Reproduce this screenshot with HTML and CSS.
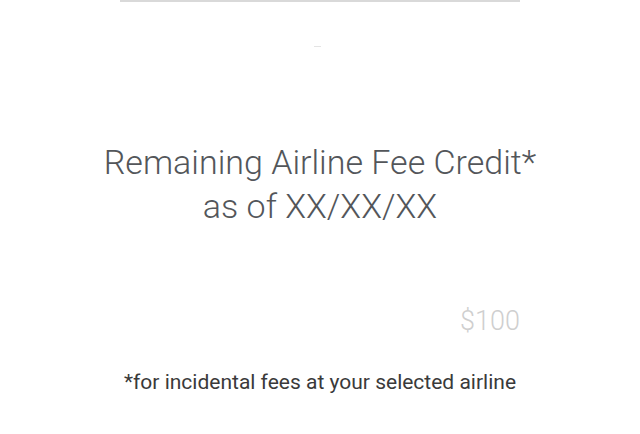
FILE: index.html
```html
<!DOCTYPE html>
<html>
<head>
<meta charset="utf-8">
<link rel="stylesheet" href="styles.css">
</head>
<body>
<div class="page">
  <div class="topbar"></div>
  <div class="dash"></div>
  <h1 class="title">Remaining Airline Fee Credit*<br>as of XX/XX/XX</h1>
  <div class="amount-row"><span class="amount">$100</span></div>
  <p class="note">*for incidental fees at your selected airline</p>
</div>
</body>
</html>
```
FILE: styles.css
```css
html, body {
  margin: 0;
  padding: 0;
  background: #fff;
}
.page {
  width: 640px;
  height: 434px;
  display: flex;
  flex-direction: column;
  align-items: center;
  font-family: Roboto, "Liberation Sans", sans-serif;
  overflow: hidden;
}
.topbar {
  width: 400px;
  height: 2px;
  background: #d9d9d9;
}
.dash {
  width: 7px;
  height: 1px;
  background: #e4e4e4;
  margin-top: 44px;
  margin-right: 5px;
}
.title {
  margin: 93px 0 0;
  font-weight: 300;
  font-size: 34px;
  line-height: 44px;
  color: #53565a;
  text-align: center;
}
.amount-row {
  width: 400px;
  display: flex;
  justify-content: flex-end;
  margin-top: 78px;
}
.amount {
  font-size: 27px;
  line-height: 30px;
  color: #cfcfcf;
  font-weight: 300;
}
.note {
  margin: 34px 0 0;
  font-size: 21px;
  line-height: 24px;
  color: #3a3a3a;
}
```
